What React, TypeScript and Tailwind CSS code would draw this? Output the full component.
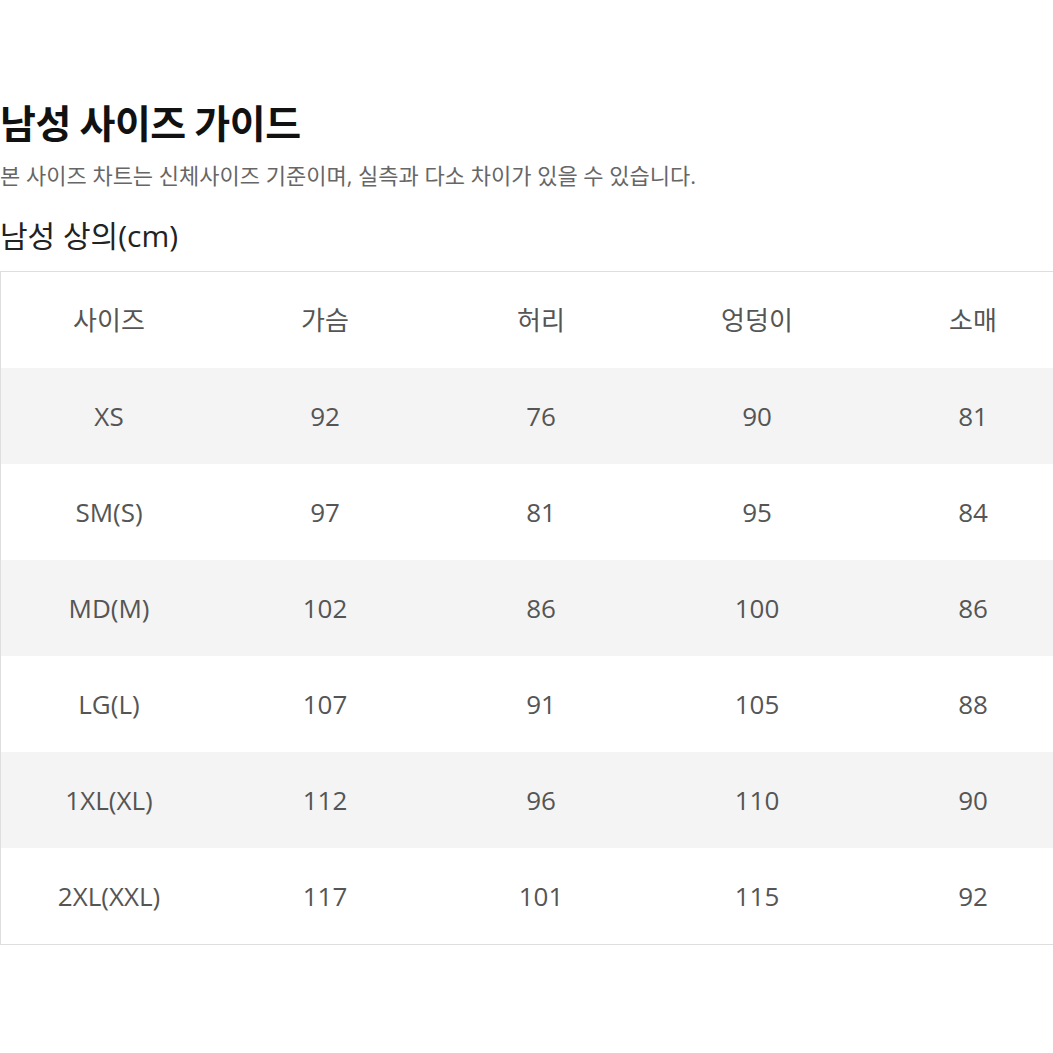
import React from 'react';

const font = { fontFamily: '"Open Sans", "Noto Sans CJK KR", "Noto Sans", sans-serif' };
const krFont = { fontFamily: '"Noto Sans CJK KR", "Noto Sans", sans-serif' };

const headers = ['사이즈', '가슴', '허리', '엉덩이', '소매'];

const rows: string[][] = [
  ['XS', '92', '76', '90', '81'],
  ['SM(S)', '97', '81', '95', '84'],
  ['MD(M)', '102', '86', '100', '86'],
  ['LG(L)', '107', '91', '105', '88'],
  ['1XL(XL)', '112', '96', '110', '90'],
  ['2XL(XXL)', '117', '101', '115', '92'],
];

const Row: React.FC<{ cells: string[]; shaded?: boolean }> = ({ cells, shaded }) => (
  <div className={`grid grid-cols-[repeat(5,216px)] h-[96px] items-center ${shaded ? 'bg-[#f4f4f4]' : 'bg-white'}`}>
    {cells.map((c, i) => (
      <div key={i} className="text-center text-[26px] text-[#555] leading-none">
        {c}
      </div>
    ))}
  </div>
);

export default function App() {
  return (
    <div className="w-[1053px] h-[1053px] bg-white overflow-hidden" style={font}>
      <div className="pt-[96px]">
        <h1 className="text-[39px] font-bold text-[#111] leading-none tracking-[-0.4px] h-[50px] flex items-center" style={krFont}>
          남성 사이즈 가이드
        </h1>
        <p className="mt-[14px] text-[22px] text-[#666] leading-none h-[30px] flex items-center">
          본 사이즈 차트는 신체사이즈 기준이며, 실측과 다소 차이가 있을 수 있습니다.
        </p>
        <h2 className="mt-[28px] text-[30px] text-[#222] leading-none h-[36px] flex items-center">
          남성 상의(cm)
        </h2>
        <div className="mt-[17px] w-[1080px] border-t border-b border-l border-[#dedede]">
          <Row cells={headers} />
          {rows.map((r, i) => (
            <Row key={r[0]} cells={r} shaded={i % 2 === 0} />
          ))}
        </div>
      </div>
    </div>
  );
}
